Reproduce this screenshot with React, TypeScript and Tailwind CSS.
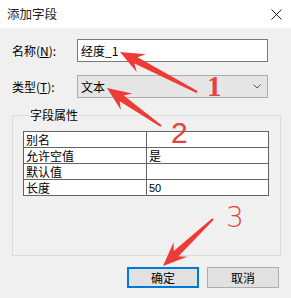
import React from "react";

type Pt = [number, number];

// builds a tapered arrow polygon from tail to tip
function arrowPoints(tip: Pt, tail: Pt, headLen = 24, headW = 10, neckLen = 18, neckW = 3.5, tailW = 1) {
  const dx = tip[0] - tail[0];
  const dy = tip[1] - tail[1];
  const len = Math.hypot(dx, dy);
  const u: Pt = [dx / len, dy / len];
  const p: Pt = [-u[1], u[0]];
  const at = (back: number, side: number): Pt => [
    tip[0] - back * u[0] + side * p[0],
    tip[1] - back * u[1] + side * p[1],
  ];
  const pts: Pt[] = [
    tip,
    at(headLen, headW),
    at(neckLen, neckW),
    [tail[0] + tailW * p[0], tail[1] + tailW * p[1]],
    [tail[0] - tailW * p[0], tail[1] - tailW * p[1]],
    at(neckLen, -neckW),
    at(headLen, -headW),
  ];
  return pts.map((q) => `${q[0].toFixed(1)},${q[1].toFixed(1)}`).join(" ");
}

const rows: [string, string][] = [
  ["别名", ""],
  ["允许空值", "是"],
  ["默认值", ""],
  ["长度", "50"],
];

function App() {
  return (
    <div
      className="relative w-[291px] h-[298px] overflow-hidden bg-[#f0f0f0] text-[12px] text-black"
      style={{ fontFamily: '"Noto Sans CJK SC", "Liberation Sans", sans-serif' }}
    >
      {/* title bar */}
      <div className="flex h-[28px] items-center justify-between bg-white pl-[7px] pr-[9px]">
        <span className="text-[12.5px] leading-[16px] text-[#222]">添加字段</span>
        <svg width="11" height="11" viewBox="0 0 11 11">
          <path d="M0.5 0.5 L10.5 10.5 M10.5 0.5 L0.5 10.5" stroke="#222" strokeWidth="1" />
        </svg>
      </div>

      <div className="pt-[11px]">
        <div className="flex h-[23px] items-center">
          <span className="w-[77px] pl-[12px] leading-[16px]">
            名称(<span className="underline">N</span>):
          </span>
          <div className="flex h-[23px] w-[191px] items-center border border-[#7a7a7a] bg-white pl-[3px] leading-[16px]">
            经度_1
          </div>
        </div>

        <div className="mt-[13px] flex h-[23px] items-center">
          <span className="w-[77px] pl-[12px] leading-[16px]">
            类型(<span className="underline">T</span>):
          </span>
          <div className="flex h-[23px] w-[191px] items-center justify-between border border-[#adadad] bg-[#e5e5e5] pl-[3px] pr-[6px] leading-[16px]">
            <span>文本</span>
            <svg width="8" height="5" viewBox="0 0 8 5">
              <path d="M0.5 0.5 L4 4 L7.5 0.5" stroke="#555" strokeWidth="1" fill="none" />
            </svg>
          </div>
        </div>

        <fieldset className="mx-[10px] ml-[12px] mt-[9px] h-[149px] w-[269px] border border-[#dcdcdc] pl-[10px] pt-[8px]">
          <legend className="ml-[6px] px-[1px] leading-[16px]">字段属性</legend>
          <table className="w-[246px] border-collapse bg-white text-[12px] leading-[14px]">
            <tbody>
              {rows.map(([k, v]) => (
                <tr key={k} className="h-[16px]">
                  <td className="w-[123px] border border-[#646464] py-0 pl-[2px]">{k}</td>
                  <td
                    className="border border-[#646464] py-0 pl-[2px]"
                    style={v === "50" ? { fontFamily: '"Liberation Sans", sans-serif', fontSize: 11 } : undefined}
                  >
                    {v}
                  </td>
                </tr>
              ))}
            </tbody>
          </table>
        </fieldset>

        <div className="mt-[11px] flex justify-end gap-[8px] pr-[12px]">
          <button className="flex h-[21px] w-[72px] items-center justify-center border border-[#0078d7] bg-[#e1e1e1] leading-[16px] outline outline-1 outline-[#0078d7] -outline-offset-2">
            确定
          </button>
          <button className="flex h-[21px] w-[72px] items-center justify-center border border-[#adadad] bg-[#e1e1e1] leading-[16px]">
            取消
          </button>
        </div>
      </div>

      {/* red annotation arrows */}
      <svg className="pointer-events-none absolute left-0 top-0" width="291" height="298">
        <polygon points={arrowPoints([120, 52], [197, 92])} fill="#ee3b36" />
        <polygon points={arrowPoints([107, 88], [161, 126])} fill="#ee3b36" />
        <polygon points={arrowPoints([163, 266], [213, 219])} fill="#ee3b36" />
      </svg>
      <span
        className="absolute left-[207px] top-[70px] text-[29px] font-bold leading-[32px] text-[#e2433f]"
        style={{ fontFamily: '"Liberation Serif", serif' }}
      >
        1
      </span>
      <span
        className="absolute left-[171px] top-[117px] text-[30px] leading-[32px] text-[#e2433f]"
        style={{ fontFamily: '"Liberation Sans", sans-serif' }}
      >
        2
      </span>
      <span
        className="absolute left-[226px] top-[202px] text-[28px] leading-[32px] text-[#e2433f]"
        style={{ fontFamily: '"DejaVu Sans", sans-serif', fontWeight: 300 }}
      >
        3
      </span>
    </div>
  );
}

export default App;
